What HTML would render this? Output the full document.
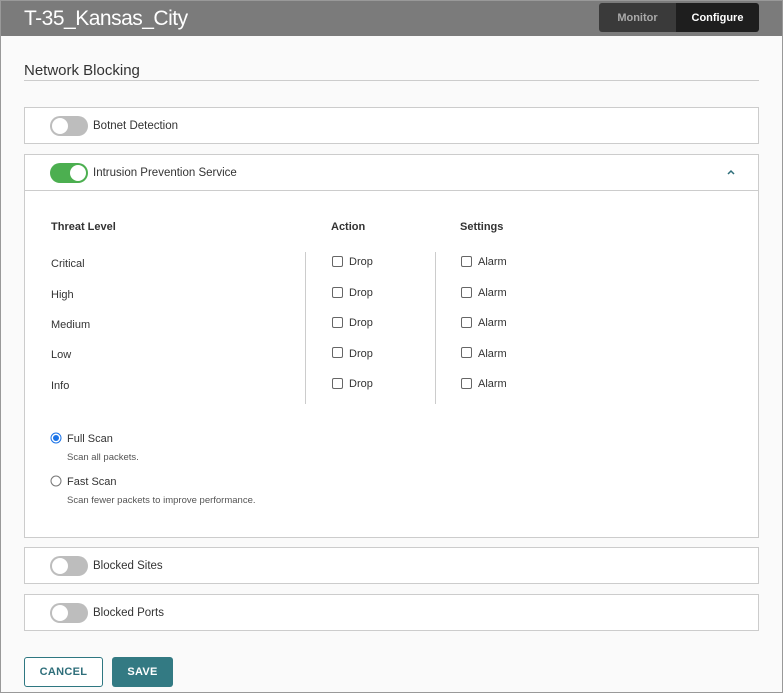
<!DOCTYPE html><html><head><style>
*{box-sizing:border-box;margin:0;padding:0}
body{width:783px;height:693px;font-family:"Liberation Sans",sans-serif;background:#fafafa;position:relative;overflow:hidden;color:#333}
.frame{position:absolute;left:0;top:0;width:783px;height:693px;border:1px solid #999;pointer-events:none;z-index:5}
.hd{position:absolute;left:0;top:0;width:783px;height:36px;background:#7b7b7b}
.hd h1{position:absolute;left:24px;top:7px;font-weight:normal;color:#fff;font-size:21px;letter-spacing:-0.5px}
.tabs{position:absolute;left:599px;top:3px;width:160px;height:29px;border-radius:3px;overflow:hidden;display:flex}
.tabs div{font-size:11px;font-weight:bold;display:flex;align-items:center;justify-content:center}
.p{position:absolute;left:24px;width:735px;border:1px solid #ccc;background:#fff}
.ph{height:36px;position:relative}
.tg{position:absolute;left:25px;top:8px;width:38px;height:20px;border-radius:10px;background:#bdbdbd}
.tg::after{content:"";position:absolute;left:2px;top:2px;width:16px;height:16px;border-radius:50%;background:#fff}
.tg.on{background:#4caf50}.tg.on::after{left:20px}
.pl{position:absolute;left:68px;top:12px;font-size:11.5px;color:#333}
.t{position:absolute;font-size:11px;color:#333}
.b{font-weight:bold}
.cb{position:absolute;width:11px;height:11px;border:1px solid #666;border-radius:2px;background:#fff}
.vl{position:absolute;top:252px;width:1px;height:152px;background:#ccc}
.btn{position:absolute;top:657px;height:30px;border-radius:3px;font-size:11px;font-weight:bold;display:flex;align-items:center;justify-content:center;letter-spacing:.3px}
</style></head><body>
<div class="frame"></div>
<div class="hd"><h1>T-35_Kansas_City</h1>
<div class="tabs"><div style="width:77px;background:#3a3a3a;color:#aaa">Monitor</div><div style="width:83px;background:#1e1e1e;color:#fff">Configure</div></div></div>
<div class="t" style="left:24px;top:62px;font-size:15px;color:#333">Network Blocking</div>
<div style="position:absolute;left:24px;top:80px;width:735px;height:1px;background:#ccc"></div>
<div class="p" style="top:107px;height:37px"><div class="ph"><div class="tg"></div><div class="pl">Botnet Detection</div></div></div>
<div class="p" style="top:154px;height:384px"><div class="ph" style="border-bottom:1px solid #ccc"><div class="tg on"></div><div class="pl">Intrusion Prevention Service</div>
<svg style="position:absolute;left:702px;top:14px" width="8" height="6"><path d="M1 5L4 2L7 5" stroke="#2e6e7a" stroke-width="1.5" fill="none"/></svg></div></div>
<div class="t b" style="left:51px;top:221px">Threat Level</div>
<div class="t b" style="left:331px;top:221px">Action</div>
<div class="t b" style="left:460px;top:221px">Settings</div>
<div class="vl" style="left:305px"></div><div class="vl" style="left:435px"></div>
<div class="t" style="left:51px;top:258px">Critical</div>
<div class="t" style="left:51px;top:289px">High</div>
<div class="t" style="left:51px;top:319px">Medium</div>
<div class="t" style="left:51px;top:349px">Low</div>
<div class="t" style="left:51px;top:380px">Info</div>
<div class="cb" style="left:332px;top:256px"></div><div class="t" style="left:349px;top:256px">Drop</div>
<div class="cb" style="left:332px;top:287px"></div><div class="t" style="left:349px;top:287px">Drop</div>
<div class="cb" style="left:332px;top:317px"></div><div class="t" style="left:349px;top:317px">Drop</div>
<div class="cb" style="left:332px;top:347px"></div><div class="t" style="left:349px;top:348px">Drop</div>
<div class="cb" style="left:332px;top:378px"></div><div class="t" style="left:349px;top:378px">Drop</div>
<div class="cb" style="left:461px;top:256px"></div><div class="t" style="left:478px;top:256px">Alarm</div>
<div class="cb" style="left:461px;top:287px"></div><div class="t" style="left:478px;top:287px">Alarm</div>
<div class="cb" style="left:461px;top:317px"></div><div class="t" style="left:478px;top:317px">Alarm</div>
<div class="cb" style="left:461px;top:347px"></div><div class="t" style="left:478px;top:348px">Alarm</div>
<div class="cb" style="left:461px;top:378px"></div><div class="t" style="left:478px;top:378px">Alarm</div>
<svg style="position:absolute;left:50px;top:432px" width="12" height="12"><circle cx="6" cy="6" r="5" fill="#fff" stroke="#1a73e8"/><circle cx="6" cy="6" r="3" fill="#1a73e8"/></svg>
<div class="t" style="left:67px;top:433px">Full Scan</div>
<div class="t" style="left:67px;top:452px;font-size:9.5px;color:#555">Scan all packets.</div>
<svg style="position:absolute;left:50px;top:475px" width="12" height="12"><circle cx="6" cy="6" r="5" fill="#fff" stroke="#777"/></svg>
<div class="t" style="left:67px;top:476px">Fast Scan</div>
<div class="t" style="left:67px;top:495px;font-size:9.5px;color:#555">Scan fewer packets to improve performance.</div>
<div class="p" style="top:547px;height:37px"><div class="ph"><div class="tg"></div><div class="pl">Blocked Sites</div></div></div>
<div class="p" style="top:594px;height:37px"><div class="ph"><div class="tg"></div><div class="pl">Blocked Ports</div></div></div>
<div class="btn" style="left:24px;width:79px;border:1px solid #2e7781;color:#2e6e7a;background:#fff">CANCEL</div>
<div class="btn" style="left:112px;width:61px;background:#337a83;color:#fff">SAVE</div>
</body></html>
